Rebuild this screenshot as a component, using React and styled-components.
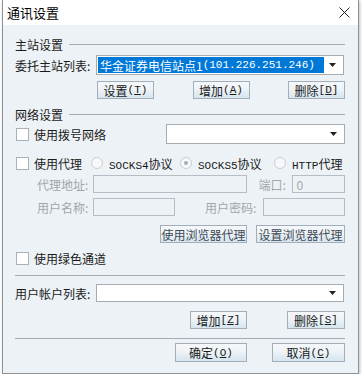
import React from "react";
import styled, { createGlobalStyle } from "styled-components";

const GlobalStyle = createGlobalStyle`
  body {
    margin: 0;
    background: #ffffff;
    font-family: "Noto Sans CJK SC", "Liberation Sans", sans-serif;
    font-size: 12px;
    color: #1a1a1a;
  }
`;

const Window = styled.div`
  width: 355px;
  height: 373px;
  margin-left: 2px;
  border: 1px solid #8e9296;
  border-top: none;
  box-shadow: 1px 1px 3px rgba(0, 0, 0, 0.25);
  display: flex;
  flex-direction: column;
  background: #edf2f6;
`;

const TitleBar = styled.div`
  height: 25px;
  background: #ffffff;
  display: flex;
  align-items: center;
  justify-content: space-between;
  padding: 0 8px 0 4px;
  font-size: 13px;
  color: #000;
`;

const Body = styled.div`
  flex: 1;
  display: flex;
  flex-direction: column;
  padding: 0 13px 0 12px;
`;

const Row = styled.div`
  display: flex;
  align-items: center;
  height: ${(p) => p.h || 18}px;
  margin-top: ${(p) => p.mt || 0}px;
  justify-content: ${(p) => p.justify || "flex-start"};
  gap: ${(p) => p.gap || 0}px;
  padding-left: ${(p) => p.pl || 0}px;
`;

const SectionTitle = styled.span`
  white-space: nowrap;
`;

const Rule = styled.div`
  flex: 1;
  height: 1px;
  background: #a6abb0;
  margin-left: ${(p) => p.ml || 0}px;
`;

const Label = styled.span`
  width: ${(p) => p.w}px;
  flex: none;
  white-space: nowrap;
  color: ${(p) => (p.disabled ? "#a3a6a9" : "#1a1a1a")};
  margin-left: ${(p) => p.ml || 0}px;
`;

const SelectBox = styled.div`
  width: ${(p) => p.w}px;
  height: ${(p) => p.h || 20}px;
  margin-left: ${(p) => p.ml || 0}px;
  box-sizing: border-box;
  border: 1px solid #a7acb2;
  background: #ffffff;
  display: flex;
  align-items: center;
  padding: 1px;
`;

const SelectValue = styled.div`
  flex: 1;
  height: 100%;
  background: ${(p) => (p.selected ? "#0078d7" : "transparent")};
  color: #ffffff;
  display: flex;
  align-items: center;
  padding-left: 2px;
  white-space: nowrap;
  overflow: hidden;
  font-size: 12px;
`;

const Arrow = styled.div`
  width: 18px;
  display: flex;
  justify-content: center;
  align-items: center;
`;

const Input = styled.div`
  width: ${(p) => p.w}px;
  height: 18px;
  margin-left: ${(p) => p.ml || 0}px;
  box-sizing: border-box;
  border: 1px solid #b6bdc4;
  background: #edf2f6;
  color: #a3a6a9;
  display: flex;
  align-items: center;
  padding-left: 3px;
  font-size: 12px;
`;

const Button = styled.div`
  width: ${(p) => p.w}px;
  height: ${(p) => p.h || 18}px;
  margin-left: ${(p) => p.ml || 0}px;
  box-sizing: border-box;
  border: 1px solid #a4aeb8;
  background: linear-gradient(#f5f8fa 0%, #eef3f6 45%, #d5e5ef 100%);
  display: flex;
  align-items: center;
  justify-content: center;
  white-space: nowrap;
  color: ${(p) => (p.dim ? "#3e4a55" : "#1a1a1a")};
  font-size: 12px;
`;

const Check = styled.span`
  width: 13px;
  height: 13px;
  box-sizing: border-box;
  border: 1px solid #a9b0b6;
  background: #ffffff;
  flex: none;
  margin-left: 1px;
  margin-right: 5px;
`;

const Radio = styled.span`
  width: 12px;
  height: 12px;
  box-sizing: border-box;
  border: 1px solid #c8ced4;
  border-radius: 50%;
  background: #f6f8fa;
  flex: none;
  margin-left: ${(p) => p.ml || 0}px;
  margin-right: 6px;
  display: flex;
  align-items: center;
  justify-content: center;
  &::after {
    content: "";
    display: ${(p) => (p.on ? "block" : "none")};
    width: 4px;
    height: 4px;
    border-radius: 50%;
    background: #a8adb2;
  }
`;

const Mono = styled.span`
  font-family: "Liberation Mono", "Noto Sans CJK SC", monospace;
  font-size: 11px;
`;

const Uline = styled.span`
  text-decoration: underline;
`;

const DropArrow = () => (
  <svg width="8" height="5" viewBox="0 0 8 5">
    <path d="M0 0 H7 L3.5 4 Z" fill="#222" />
  </svg>
);

const CloseIcon = () => (
  <svg width="11" height="11" viewBox="0 0 11 11">
    <path d="M0.5 0.5 L10.5 10.5 M10.5 0.5 L0.5 10.5" stroke="#222" strokeWidth="1" />
  </svg>
);

const App = () => {
  return (
    <>
      <GlobalStyle />
      <Window>
        <TitleBar>
          <span>通讯设置</span>
          <CloseIcon />
        </TitleBar>
        <Body>
          <Row h={14} mt={12}>
            <SectionTitle>主站设置</SectionTitle>
            <Rule ml={6} />
          </Row>
          <Row h={20} mt={4}>
            <Label w={81}>委托主站列表:</Label>
            <SelectBox w={248}>
              <SelectValue selected>
                华金证券电信站点1<Mono>(101.226.251.246)</Mono>
              </SelectValue>
              <Arrow>
                <DropArrow />
              </Arrow>
            </SelectBox>
          </Row>
          <Row mt={6} pl={82} justify="space-between">
            <Button w={57}>
              设置<Mono>(<Uline>T</Uline>)</Mono>
            </Button>
            <Button w={57}>
              增加<Mono>(<Uline>A</Uline>)</Mono>
            </Button>
            <Button w={57}>
              删除<Mono>[<Uline>D</Uline>]</Mono>
            </Button>
          </Row>
          <Row h={14} mt={8}>
            <SectionTitle>网络设置</SectionTitle>
            <Rule ml={6} />
          </Row>
          <Row h={20} mt={3}>
            <Check />
            <Label w={132}>使用拨号网络</Label>
            <SelectBox w={179}>
              <SelectValue />
              <Arrow>
                <DropArrow />
              </Arrow>
            </SelectBox>
          </Row>
          <Row mt={10}>
            <Check />
            <Label w={57}>使用代理</Label>
            <Radio />
            <Label w={71}>
              <Mono>SOCKS4</Mono>协议
            </Label>
            <Radio on="1" />
            <Label w={76}>
              <Mono>SOCKS5</Mono>协议
            </Label>
            <Radio />
            <Label w={48}>
              <Mono>HTTP</Mono>代理
            </Label>
          </Row>
          <Row mt={3}>
            <Label w={56} ml={22} disabled>
              代理地址:
            </Label>
            <Input w={156} />
            <Label w={34} ml={11} disabled>
              端口:
            </Label>
            <Input w={53}>0</Input>
          </Row>
          <Row mt={5}>
            <Label w={56} ml={22} disabled>
              用户名称:
            </Label>
            <Input w={83} />
            <Label w={58} ml={30} disabled>
              用户密码:
            </Label>
            <Input w={83} />
          </Row>
          <Row mt={9} justify="flex-end" gap={9}>
            <Button w={87} dim="1">使用浏览器代理</Button>
            <Button w={89} dim="1">设置浏览器代理</Button>
          </Row>
          <Row h={16} mt={7}>
            <Check />
            <Label w={120}>使用绿色通道</Label>
          </Row>
          <Row h={1} mt={9}>
            <Rule />
          </Row>
          <Row mt={8}>
            <Label w={81}>用户帐户列表:</Label>
            <SelectBox w={248} h={18}>
              <SelectValue />
              <Arrow>
                <DropArrow />
              </Arrow>
            </SelectBox>
          </Row>
          <Row mt={9} justify="flex-end" gap={40}>
            <Button w={57}>
              增加<Mono>[<Uline>Z</Uline>]</Mono>
            </Button>
            <Button w={58}>
              删除<Mono>[<Uline>S</Uline>]</Mono>
            </Button>
          </Row>
          <Row h={1} mt={9}>
            <Rule />
          </Row>
          <Row h={19} mt={4} justify="flex-end" gap={25}>
            <Button w={72} h={19}>
              确定<Mono>(<Uline>O</Uline>)</Mono>
            </Button>
            <Button w={73} h={19}>
              取消<Mono>(<Uline>C</Uline>)</Mono>
            </Button>
          </Row>
        </Body>
      </Window>
    </>
  );
};

export default App;
